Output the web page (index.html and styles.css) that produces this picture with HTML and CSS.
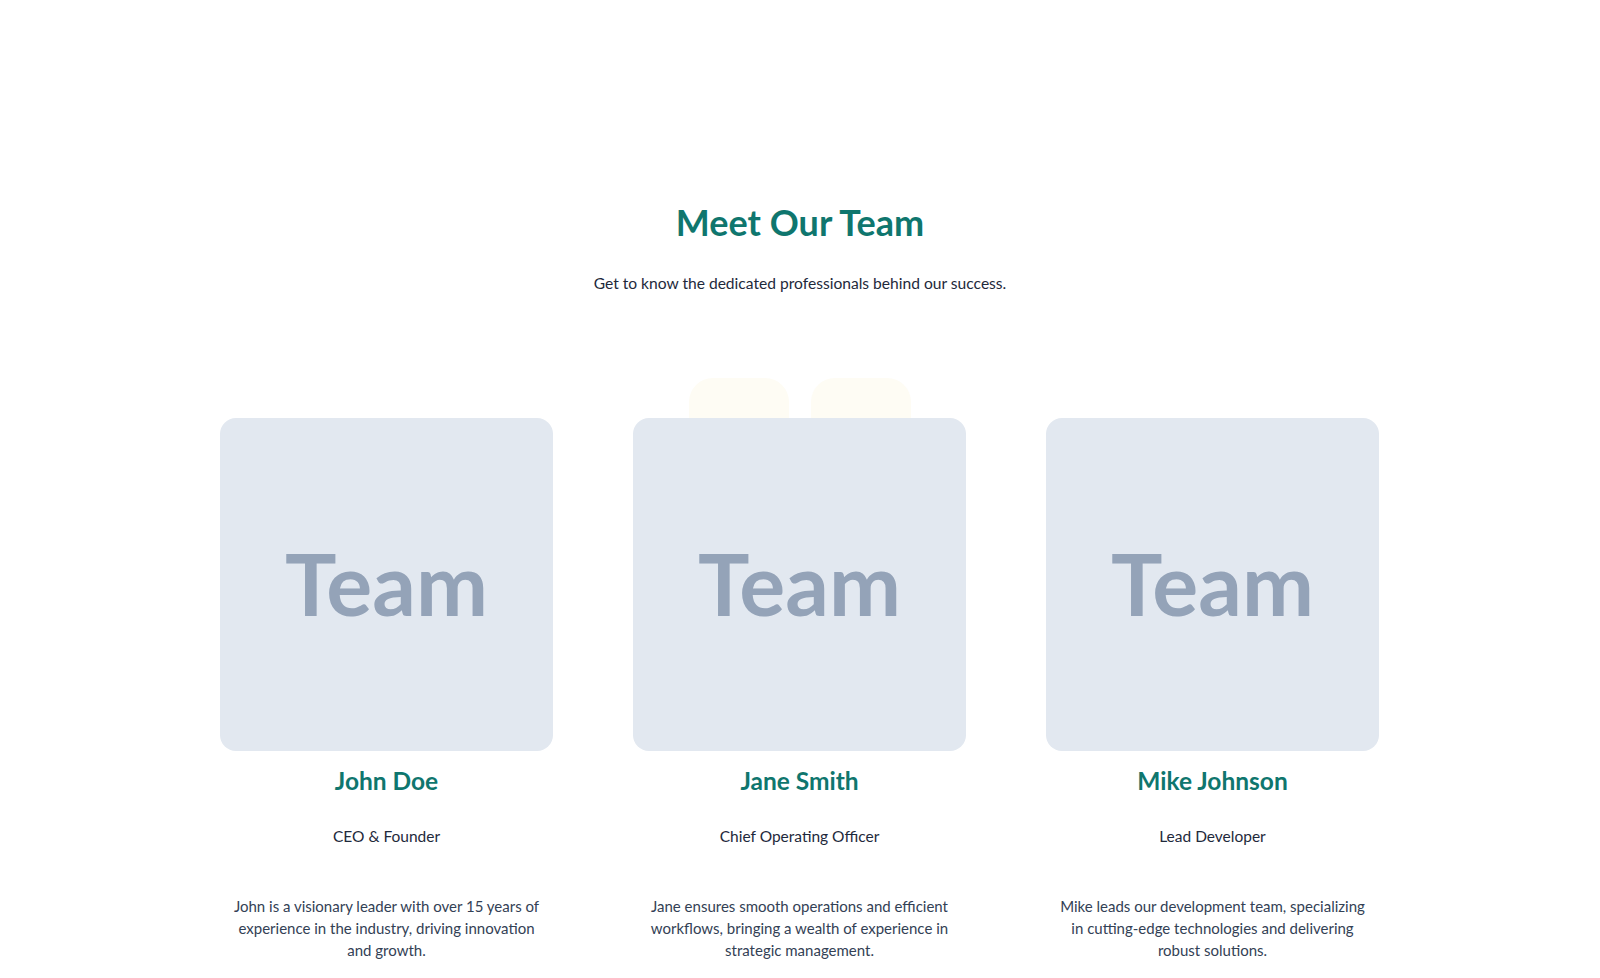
FILE: index.html
```html
<!DOCTYPE html>
<html lang="en">
<head>
<meta charset="utf-8">
<title>Meet Our Team</title>
<link rel="stylesheet" href="styles.css">
</head>
<body>
<section class="team">
  <header class="team-head">
    <h1 class="team-title">Meet Our Team</h1>
    <p class="team-sub">Get to know the dedicated professionals behind our success.</p>
  </header>
  <div class="team-stage">
    <div class="blob blob-a"></div>
    <div class="blob blob-b"></div>
    <div class="team-grid">
      <article class="member">
        <div class="photo"><span>Team</span></div>
        <h2 class="name">John Doe</h2>
        <p class="role">CEO &amp; Founder</p>
        <p class="bio">John is a visionary leader with over 15 years of experience in the industry, driving innovation and growth.</p>
      </article>
      <article class="member">
        <div class="photo"><span>Team</span></div>
        <h2 class="name">Jane Smith</h2>
        <p class="role">Chief Operating Officer</p>
        <p class="bio">Jane ensures smooth operations and efficient workflows, bringing a wealth of experience in strategic management.</p>
      </article>
      <article class="member">
        <div class="photo"><span>Team</span></div>
        <h2 class="name">Mike Johnson</h2>
        <p class="role">Lead Developer</p>
        <p class="bio">Mike leads our development team, specializing in cutting-edge technologies and delivering robust solutions.</p>
      </article>
    </div>
  </div>
</section>
</body>
</html>
```
FILE: styles.css
```css
* { box-sizing: border-box; }

html, body {
  margin: 0;
  padding: 0;
  background: #ffffff;
}

body {
  font-family: "Lato", "Noto Sans", sans-serif;
  color: #1e293b;
}

.team {
  padding-top: 202px;
}

.team-head {
  text-align: center;
}

.team-title {
  margin: 0;
  font-size: 36px;
  line-height: 40px;
  font-weight: 700;
  color: #0f766e;
}

.team-sub {
  margin: 29px 0 0;
  font-size: 15.6px;
  line-height: 24px;
  color: #1e293b;
}

.team-stage {
  position: relative;
  margin-top: 123px;
}

/* soft decorative tiles peeking above the middle card */
.blob {
  position: absolute;
  top: -40px;
  width: 100px;
  height: 80px;
  border-radius: 24px;
  background: #fefcf4;
}
.blob-a { left: 689px; }
.blob-b { left: 811px; }

.team-grid {
  position: relative;
  width: 1160px;
  margin: 0 auto;
  display: grid;
  grid-template-columns: repeat(3, 333px);
  column-gap: 80px;
}

.member {
  display: flex;
  flex-direction: column;
  align-items: center;
  text-align: center;
}

.photo {
  width: 333px;
  height: 333px;
  border-radius: 16px;
  background: #e2e8f0;
  display: flex;
  align-items: center;
  justify-content: center;
}

.photo span {
  font-family: "Lato", sans-serif;
  font-weight: 700;
  font-size: 86px;
  line-height: 1;
  color: #94a3b8;
  padding-bottom: 4px;
}

.name {
  margin: 14px 0 0;
  font-size: 24.5px;
  line-height: 32px;
  font-weight: 700;
  color: #0f766e;
}

.role {
  margin: 27px 0 0;
  font-size: 15.5px;
  line-height: 24px;
  color: #1e293b;
}

.bio {
  margin: 47px 0 0;
  padding: 0 12px;
  font-size: 15px;
  line-height: 22px;
  color: #334155;
}
```
